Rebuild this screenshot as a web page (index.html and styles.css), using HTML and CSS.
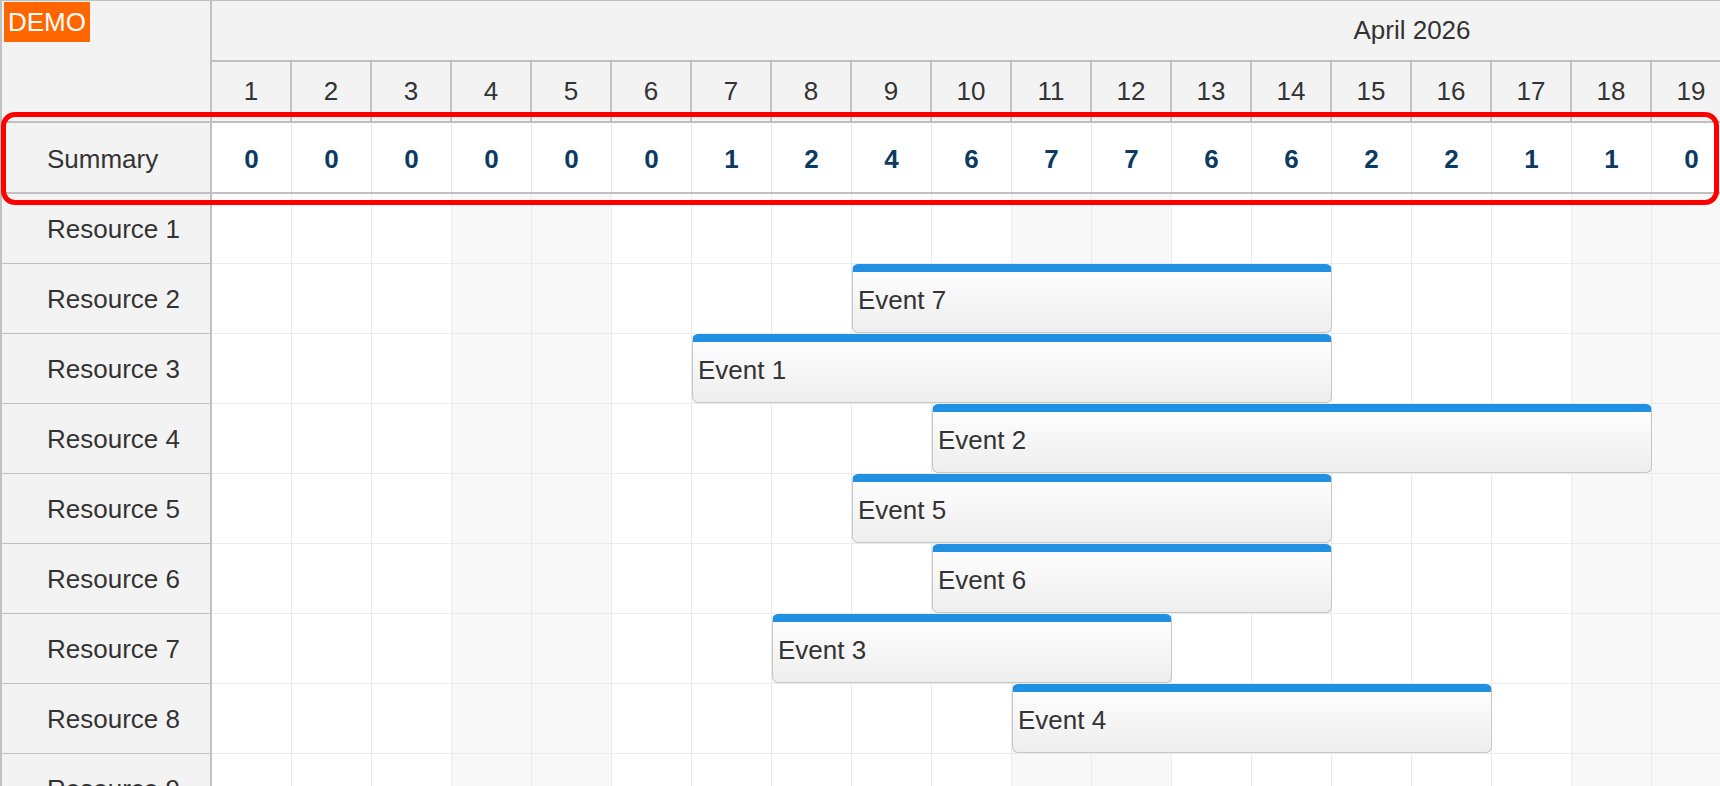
FILE: index.html
```html
<!DOCTYPE html>
<html lang="en">
<head>
<meta charset="utf-8">
<title>Scheduler</title>
<link rel="stylesheet" href="styles.css">
</head>
<body>
<div class="scheduler">
  <div class="corner"><span class="demo">DEMO</span></div>
  <div class="timeheader">
    <div class="month">April 2026</div>
    <div class="days">
      <span>1</span><span>2</span><span>3</span><span>4</span><span>5</span><span>6</span><span>7</span><span>8</span><span>9</span><span>10</span><span>11</span><span>12</span><span>13</span><span>14</span><span>15</span><span>16</span><span>17</span><span>18</span><span>19</span>
    </div>
  </div>

  <div class="rh sum">Summary</div>
  <div class="sumrow">
    <span>0</span><span>0</span><span>0</span><span>0</span><span>0</span><span>0</span><span>1</span><span>2</span><span>4</span><span>6</span><span>7</span><span>7</span><span>6</span><span>6</span><span>2</span><span>2</span><span>1</span><span>1</span><span>0</span>
  </div>

  <div class="rh">Resource 1</div>
  <div class="row">
    <div class="cells"><i></i><i></i><i></i><i class="w"></i><i class="w"></i><i></i><i></i><i></i><i></i><i></i><i class="w"></i><i class="w"></i><i></i><i></i><i></i><i></i><i></i><i class="w"></i><i class="w"></i></div>
  </div>

  <div class="rh">Resource 2</div>
  <div class="row">
    <div class="cells"><i></i><i></i><i></i><i class="w"></i><i class="w"></i><i></i><i></i><i></i><i></i><i></i><i class="w"></i><i class="w"></i><i></i><i></i><i></i><i></i><i></i><i class="w"></i><i class="w"></i></div>
    <div class="ev" style="grid-column: 9 / 15">Event 7</div>
  </div>

  <div class="rh">Resource 3</div>
  <div class="row">
    <div class="cells"><i></i><i></i><i></i><i class="w"></i><i class="w"></i><i></i><i></i><i></i><i></i><i></i><i class="w"></i><i class="w"></i><i></i><i></i><i></i><i></i><i></i><i class="w"></i><i class="w"></i></div>
    <div class="ev" style="grid-column: 7 / 15">Event 1</div>
  </div>

  <div class="rh">Resource 4</div>
  <div class="row">
    <div class="cells"><i></i><i></i><i></i><i class="w"></i><i class="w"></i><i></i><i></i><i></i><i></i><i></i><i class="w"></i><i class="w"></i><i></i><i></i><i></i><i></i><i></i><i class="w"></i><i class="w"></i></div>
    <div class="ev" style="grid-column: 10 / 19">Event 2</div>
  </div>

  <div class="rh">Resource 5</div>
  <div class="row">
    <div class="cells"><i></i><i></i><i></i><i class="w"></i><i class="w"></i><i></i><i></i><i></i><i></i><i></i><i class="w"></i><i class="w"></i><i></i><i></i><i></i><i></i><i></i><i class="w"></i><i class="w"></i></div>
    <div class="ev" style="grid-column: 9 / 15">Event 5</div>
  </div>

  <div class="rh">Resource 6</div>
  <div class="row">
    <div class="cells"><i></i><i></i><i></i><i class="w"></i><i class="w"></i><i></i><i></i><i></i><i></i><i></i><i class="w"></i><i class="w"></i><i></i><i></i><i></i><i></i><i></i><i class="w"></i><i class="w"></i></div>
    <div class="ev" style="grid-column: 10 / 15">Event 6</div>
  </div>

  <div class="rh">Resource 7</div>
  <div class="row">
    <div class="cells"><i></i><i></i><i></i><i class="w"></i><i class="w"></i><i></i><i></i><i></i><i></i><i></i><i class="w"></i><i class="w"></i><i></i><i></i><i></i><i></i><i></i><i class="w"></i><i class="w"></i></div>
    <div class="ev" style="grid-column: 8 / 13">Event 3</div>
  </div>

  <div class="rh">Resource 8</div>
  <div class="row">
    <div class="cells"><i></i><i></i><i></i><i class="w"></i><i class="w"></i><i></i><i></i><i></i><i></i><i></i><i class="w"></i><i class="w"></i><i></i><i></i><i></i><i></i><i></i><i class="w"></i><i class="w"></i></div>
    <div class="ev" style="grid-column: 11 / 17">Event 4</div>
  </div>

  <div class="rh">Resource 9</div>
  <div class="row">
    <div class="cells"><i></i><i></i><i></i><i class="w"></i><i class="w"></i><i></i><i></i><i></i><i></i><i></i><i class="w"></i><i class="w"></i><i></i><i></i><i></i><i></i><i></i><i class="w"></i><i class="w"></i></div>
  </div>
</div>
<div class="annot"></div>
</body>
</html>
```

FILE: styles.css
```css
* {
  box-sizing: border-box;
}

html, body {
  margin: 0;
  padding: 0;
}

body {
  width: 1720px;
  height: 786px;
  overflow: hidden;
  position: relative;
  background: #ffffff;
  font-family: "Liberation Sans", Arial, sans-serif;
  color: #333333;
}

.scheduler {
  display: grid;
  grid-template-columns: 212px 1520px;
  border-top: 1px solid #c0c0c0;
  width: max-content;
}

.corner {
  position: relative;
  height: 122px;
  background: #f3f3f3;
  border-left: 2px solid #c0c0c0;
  border-right: 2px solid #c0c0c0;
  border-bottom: 2px solid #c0c0c0;
}

.demo {
  position: absolute;
  left: 2px;
  top: 1px;
  width: 86px;
  height: 40px;
  background: #ff6600;
  color: #ffffff;
  font-size: 26px;
  line-height: 40px;
  text-align: center;
}

.timeheader {
  display: flex;
  flex-direction: column;
}

.month {
  height: 61px;
  background: #f3f3f3;
  border-bottom: 2px solid #c0c0c0;
  display: flex;
  align-items: center;
  justify-content: center;
  padding-left: 880px;
  font-size: 26px;
  white-space: nowrap;
}

.days {
  height: 61px;
  display: grid;
  grid-template-columns: repeat(19, 80px);
}

.days span {
  background: #f3f3f3;
  border-right: 2px solid #c0c0c0;
  border-bottom: 2px solid #c0c0c0;
  display: flex;
  align-items: center;
  justify-content: center;
  font-size: 26px;
}

.rh {
  height: 70px;
  background: #f3f3f3;
  border-left: 2px solid #c0c0c0;
  border-right: 2px solid #c0c0c0;
  border-bottom: 1px solid #c0c0c0;
  display: flex;
  align-items: center;
  padding-left: 45px;
  padding-top: 2px;
  font-size: 26px;
  white-space: nowrap;
}

.rh.sum {
  height: 71px;
  padding-top: 4px;
  border-bottom: 2px solid #c0c0c0;
}

.sumrow {
  height: 71px;
  display: grid;
  grid-template-columns: repeat(19, 80px);
  border-bottom: 2px solid #c0c0c0;
  background: #ffffff;
}

.sumrow span {
  border-right: 1px solid #e6e6e6;
  display: flex;
  align-items: center;
  justify-content: center;
  padding-top: 4px;
  font-size: 26px;
  font-weight: bold;
  color: #0d3a63;
}

.row {
  height: 70px;
  display: grid;
  grid-template-columns: repeat(19, 80px);
  grid-template-rows: 70px;
}

.cells {
  grid-column: 1 / -1;
  grid-row: 1;
  display: grid;
  grid-template-columns: repeat(19, 80px);
}

.cells i {
  display: block;
  background: #ffffff;
  border-right: 1px solid #ebebeb;
  border-bottom: 1px solid #ebebeb;
}

.cells i.w {
  background: #f8f8f8;
}

.ev {
  grid-row: 1;
  position: relative;
  z-index: 1;
  height: 69px;
  border: 1px solid #c6c6c6;
  border-top: 8px solid #2190e3;
  border-radius: 6px;
  background: linear-gradient(#fdfdfd, #eeeeee);
  display: flex;
  align-items: center;
  padding-left: 5px;
  padding-bottom: 3px;
  font-size: 26px;
  color: #333333;
  white-space: nowrap;
  overflow: hidden;
}

.annot {
  position: absolute;
  left: 1px;
  top: 112px;
  width: 1718px;
  height: 93px;
  border: 5px solid #ff0000;
  border-radius: 14px;
  pointer-events: none;
}
```
